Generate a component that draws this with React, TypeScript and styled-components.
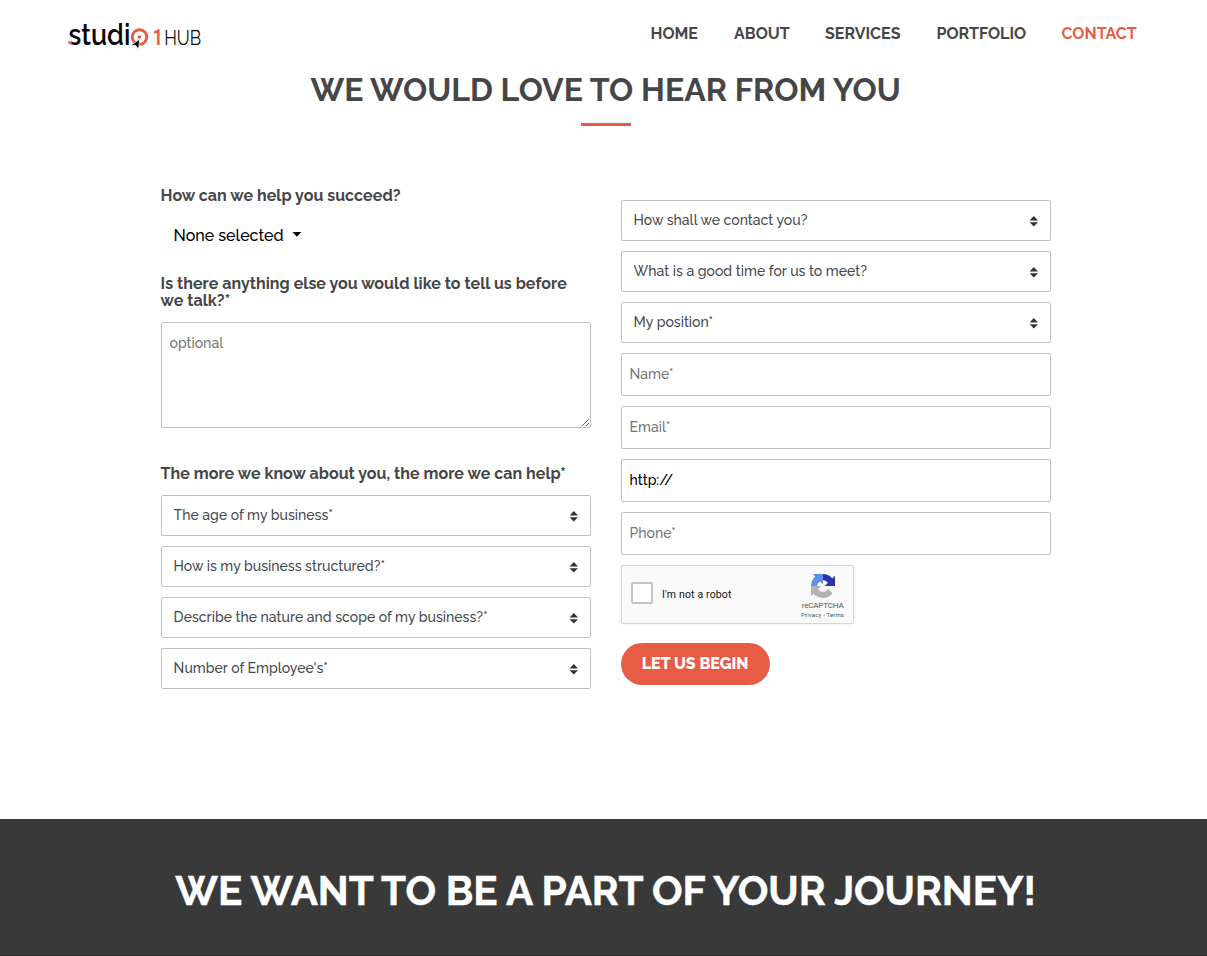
import React from "react";
import styled, { createGlobalStyle } from "styled-components";

const ACCENT = "#e85b44";
const INK = "#464648";
const FONT = `Raleway, Lato, "Liberation Sans", sans-serif`;

const GlobalStyle = createGlobalStyle`
  *, *::before, *::after { box-sizing: border-box; }
  body { margin: 0; background: #fff; color: ${INK}; font-family: ${FONT}; overflow: hidden; }
  h1, h2, h3, p { margin: 0; }
`;

const Page = styled.div`
  display: flex;
  flex-direction: column;
  height: 956px;
`;

const Header = styled.header`
  display: flex;
  justify-content: space-between;
  height: 66px;
  padding: 18px 68.5px 0 64px;
`;

const Nav = styled.nav`
  display: grid;
  grid-template-columns: 83.5px 91px 111.5px 125px 77px;
  height: 32px;
  line-height: 32px;
`;

const NavLink = styled.a<{ $active?: boolean }>`
  color: ${(p) => (p.$active ? ACCENT : INK)};
  font-size: 16px;
  font-weight: 700;
  white-space: nowrap;
  text-decoration: none;
`;

const Main = styled.main`
  display: flex;
  flex-direction: column;
  align-items: center;
  width: 890px;
  height: 753px;
  margin-left: 160.6px;
`;

const Title = styled.h1`
  height: 48px;
  color: ${INK};
  font-size: 32px;
  font-weight: 700;
  line-height: 48px;
  letter-spacing: 0.03px;
  white-space: nowrap;
`;

const Rule = styled.div`
  width: 50px;
  height: 3px;
  margin: 9px 0 61px;
  background: ${ACCENT};
`;

const Form = styled.form`
  display: grid;
  grid-template-columns: 430px 430px;
  gap: 30px;
  align-items: start;
`;

const Column = styled.div<{ $offset?: number }>`
  display: flex;
  flex-direction: column;
  align-items: flex-start;
  padding-top: ${(p) => p.$offset ?? 0}px;
`;

const Stack = styled.div`
  display: flex;
  flex-direction: column;
  gap: 10px;
  width: 100%;
`;

const Label = styled.h3`
  margin-bottom: 13px;
  font-size: 16px;
  font-weight: 700;
  line-height: 17px;
  letter-spacing: 0.05px;
  white-space: nowrap;
`;

const Multi = styled.button`
  display: flex;
  align-items: center;
  gap: 8px;
  height: 36px;
  margin-bottom: 22px;
  padding: 0 13px;
  border: 0;
  background: none;
  color: #000;
  font: 500 16px ${FONT};
`;

const CaretIcon = styled.svg`
  margin-top: -1px;
`;

const SelectWrap = styled.div`
  display: grid;
  align-items: center;
  height: 41px;

  > * { grid-area: 1 / 1; }
  > svg { justify-self: end; margin: 1px 12.4px 0 0; pointer-events: none; }
`;

const Select = styled.select`
  appearance: none;
  width: 100%;
  height: 41px;
  padding: 0 30px 2px 12px;
  border: 1px solid #c0c0c2;
  border-radius: 2px;
  background: #fff;
  color: #444a50;
  font: 500 14px ${FONT};
  letter-spacing: 0.02px;
`;

const Input = styled.input`
  width: 100%;
  height: 43px;
  padding: 0 8px 2px;
  border: 1px solid #c0c0c2;
  border-radius: 2px;
  background: #fff;
  color: #000;
  font: 500 14px ${FONT};

  &::placeholder { color: #757575; }
`;

const Area = styled.textarea`
  display: block;
  width: 430px;
  height: 106px;
  margin-bottom: 37px;
  padding: 11px 8px;
  border: 1px solid #c0c0c2;
  border-radius: 2px;
  resize: vertical;
  font: 500 14px/18px ${FONT};

  &::placeholder { color: #757575; }
`;

const Captcha = styled.div`
  display: flex;
  align-items: center;
  width: 233px;
  height: 59px;
  margin: 10px 0 19px;
  padding: 0 8px 0 9px;
  border: 1px solid #d6d6d6;
  border-radius: 2px;
  background: #f9f9f9;
  box-shadow: 0 0 3px rgba(0, 0, 0, 0.1);
  font-family: Roboto, sans-serif;
`;

const Tick = styled.span`
  width: 22px;
  height: 22px;
  margin: -3px 9.4px 0 0;
  border: 2px solid #c4c4c4;
  border-radius: 2px;
  background: #fff;
`;

const RobotText = styled.span`
  flex: 1;
  color: #111;
  font-size: 10.5px;
  letter-spacing: 0.15px;
`;

const Brand = styled.div`
  display: flex;
  flex-direction: column;
  align-items: center;
  width: 44px;
  padding-top: 5px;
`;

const BrandName = styled.span`
  margin-top: 3px;
  color: #555;
  font-size: 8px;
  line-height: 9px;
  letter-spacing: -0.15px;
`;

const BrandLinks = styled.span`
  color: #555;
  font-size: 6px;
  line-height: 10px;
  letter-spacing: 0.15px;
  white-space: nowrap;
`;

const Submit = styled.button`
  width: 149px;
  height: 42px;
  padding: 0 0 2px;
  border: 0;
  border-radius: 21px;
  background: ${ACCENT};
  color: #fff;
  font: 800 16px ${FONT};
`;

const Banner = styled.section`
  flex: 1;
  padding: 47px 0 0 160.6px;
  border-bottom: 1px solid #332e30;
  background: #393939;
`;

const BannerTitle = styled.h2`
  width: 890px;
  color: #fff;
  font-size: 40.5px;
  font-weight: 700;
  line-height: 50px;
  letter-spacing: -0.04px;
  text-align: center;
  white-space: nowrap;
  -webkit-text-stroke: 0.4px #fff;
`;

const LogoSvg = styled.svg`
  display: block;
  overflow: visible;
`;

const Logo = () => (
  <LogoSvg width="150" height="34" viewBox="64 18 150 34" role="img" aria-label="Studio 1 Hub">
    <text x="68.300" y="45" fontFamily={FONT} fontSize="30" fontWeight="600" fill="#0a0a0a" textLength="62" lengthAdjust="spacingAndGlyphs">studi</text>
    <path d="M67.500 39.500h3.600v6h-3.600z" fill="#fff" />
    <path d="M68.800 41.400c.5 1.500 1.500 2.200 3.200 2.500" fill="none" stroke={ACCENT} strokeWidth="2.200" />
    <circle cx="139.500" cy="37" r="7.300" fill="none" stroke={ACCENT} strokeWidth="2.900" />
    <circle cx="139.400" cy="37" r="1.800" fill={ACCENT} />
    <path d="M139.600 39.200 131 45.200l4.700.3 2.900 3.800z" fill="#0a0a0a" stroke="#fff" strokeWidth=".7" />
    <text x="152.800" y="45" fontFamily="Roboto, sans-serif" fontSize="22" fontWeight="700" fill={ACCENT} textLength="10" lengthAdjust="spacingAndGlyphs">1</text>
    <text x="164.200" y="44.600" fontFamily={FONT} fontSize="21" fontWeight="400" fill="#0a0a0a" textLength="37" lengthAdjust="spacingAndGlyphs">HUB</text>
  </LogoSvg>
);

const Caret = () => (
  <CaretIcon width="10" height="5" viewBox="0 0 10 5">
    <path d="M.4 0h9L4.900 4.800z" />
  </CaretIcon>
);

const Arrows = () => (
  <svg width="9" height="11" viewBox="0 0 9 11" fill="#333">
    <path d="M4.800 0 9 4.400H.6z" />
    <path d="M4.800 10.600 9 6.200H.6z" />
  </svg>
);

const RecaptchaMark = () => (
  <svg width="24" height="24" viewBox="0 0 64 64">
    <path fill="#2b32ab" d="M64 31.955l-.033-1.370V4.687l-7.160 7.160C50.948 4.674 42.033.093 32.050.093c-10.400 0-19.622 4.960-25.458 12.640l11.736 11.860a15.550 15.550 0 0 1 4.754-5.334c2.050-1.600 4.952-2.906 8.968-2.906.485 0 .860.057 1.135.163 4.976.393 9.288 3.140 11.828 7.124l-8.307 8.307L64 31.953" />
    <path fill="#5a8df0" d="M31.862.094l-1.370.033H4.594l7.160 7.160C4.580 13.147 0 22.060 0 32.046c0 10.400 4.960 19.622 12.640 25.458L24.500 45.768a15.550 15.550 0 0 1-5.334-4.754c-1.600-2.050-2.906-4.952-2.906-8.968 0-.485.057-.860.163-1.135.393-4.976 3.140-9.288 7.124-11.828l8.307 8.307L31.860.095" />
    <path fill="#b3b3b3" d="M.001 32.045l.033 1.370v25.898l7.160-7.160c5.860 7.173 14.774 11.754 24.760 11.754 10.400 0 19.622-4.960 25.458-12.640l-11.736-11.860a15.550 15.550 0 0 1-4.754 5.334c-2.050 1.600-4.952 2.906-8.968 2.906-.485 0-.860-.057-1.135-.163-4.976-.393-9.288-3.140-11.828-7.124l8.307-8.307c-10.522.040-22.400.066-27.295-.005" />
  </svg>
);

const SelectField = ({ text }: { text: string }) => (
  <SelectWrap>
    <Select aria-label={text}>
      <option>{text}</option>
    </Select>
    <Arrows />
  </SelectWrap>
);

const links = ["HOME", "ABOUT", "SERVICES", "PORTFOLIO", "CONTACT"];

const businessFields = [
  "The age of my business*",
  "How is my business structured?*",
  "Describe the nature and scope of my business?*",
  "Number of Employee's*",
];

const contactFields = [
  "How shall we contact you?",
  "What is a good time for us to meet?",
  "My position*",
];

export default function App() {
  return (
    <Page>
      <GlobalStyle />
      <Header>
        <Logo />
        <Nav>
          {links.map((l) => (
            <NavLink key={l} $active={l === "CONTACT"}>{l}</NavLink>
          ))}
        </Nav>
      </Header>
      <Main>
        <Title>WE WOULD LOVE TO HEAR FROM YOU</Title>
        <Rule />
        <Form>
          <Column>
            <Label>How can we help you succeed?</Label>
            <Multi type="button">None selected <Caret /></Multi>
            <Label>Is there anything else you would like to tell us before<br />we talk?*</Label>
            <Area placeholder="optional" />
            <Label>The more we know about you, the more we can help*</Label>
            <Stack>
              {businessFields.map((f) => <SelectField key={f} text={f} />)}
            </Stack>
          </Column>
          <Column $offset={13}>
            <Stack>
              {contactFields.map((f) => <SelectField key={f} text={f} />)}
              <Input placeholder="Name*" />
              <Input placeholder="Email*" />
              <Input defaultValue="http://" />
              <Input placeholder="Phone*" />
            </Stack>
            <Captcha>
              <Tick />
              <RobotText>I'm not a robot</RobotText>
              <Brand>
                <RecaptchaMark />
                <BrandName>reCAPTCHA</BrandName>
                <BrandLinks>Privacy - Terms</BrandLinks>
              </Brand>
            </Captcha>
            <Submit type="button">LET US BEGIN</Submit>
          </Column>
        </Form>
      </Main>
      <Banner>
        <BannerTitle>WE WANT TO BE A PART OF YOUR JOURNEY!</BannerTitle>
      </Banner>
    </Page>
  );
}
